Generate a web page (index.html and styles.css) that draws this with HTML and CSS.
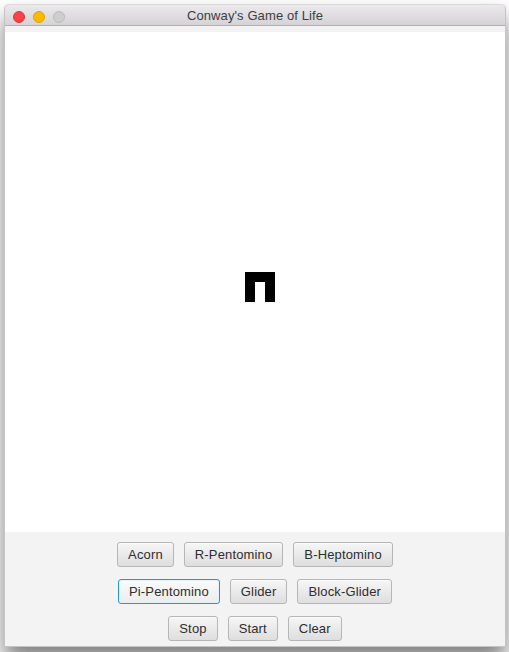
FILE: index.html
```html
<!DOCTYPE html>
<html>
<head>
<meta charset="utf-8">
<link rel="stylesheet" href="styles.css">
</head>
<body>
<div class="window">
  <div class="titlebar">
    <div class="lights">
      <span class="light red"></span>
      <span class="light yellow"></span>
      <span class="light grey"></span>
    </div>
    <div class="title">Conway's Game of Life</div>
  </div>
  <div class="strip"></div>
  <div class="canvas">
    <div class="pattern">
      <span class="cell on"></span><span class="cell on"></span><span class="cell on"></span>
      <span class="cell on"></span><span class="cell"></span><span class="cell on"></span>
      <span class="cell on"></span><span class="cell"></span><span class="cell on"></span>
    </div>
  </div>
  <div class="controls">
    <div class="row">
      <button class="btn">Acorn</button>
      <button class="btn">R-Pentomino</button>
      <button class="btn">B-Heptomino</button>
    </div>
    <div class="row">
      <button class="btn focused">Pi-Pentomino</button>
      <button class="btn">Glider</button>
      <button class="btn">Block-Glider</button>
    </div>
    <div class="row">
      <button class="btn">Stop</button>
      <button class="btn">Start</button>
      <button class="btn">Clear</button>
    </div>
  </div>
</div>
</body>
</html>
```

FILE: styles.css
```css
html, body {
  margin: 0;
  padding: 0;
  background: #ffffff;
  overflow: hidden;
  height: 652px;
}
body {
  font-family: "Liberation Sans", Arial, sans-serif;
}
.window {
  margin: 4px 0 0 4px;
  width: 500px;
  height: 642px;
  border: 1px solid #c4c4c4;
  border-top: none;
  border-radius: 5px 5px 0 0;
  background: #f3f3f3;
  box-shadow: 0 14px 22px rgba(0, 0, 0, 0.5);
  overflow: hidden;
}
.titlebar {
  position: relative;
  height: 22px;
  background: linear-gradient(#ebe9eb, #d5d3d5);
  border-top: 1px solid #dadada;
  border-bottom: 1px solid #b1b1b1;
  border-radius: 5px 5px 0 0;
  display: flex;
  align-items: center;
  justify-content: center;
  box-sizing: border-box;
}
.lights {
  position: absolute;
  left: 8px;
  top: 6px;
  display: flex;
  gap: 8px;
}
.light {
  width: 12px;
  height: 12px;
  border-radius: 50%;
  box-sizing: border-box;
}
.red { background: #fd3f47; border: 1px solid #e0333a; }
.yellow { background: #fdb900; border: 1px solid #e0a300; }
.grey { background: #cfcecf; border: 1px solid #bcbbbc; }
.title {
  font-size: 13px;
  color: #3d3d3d;
  line-height: 22px;
  margin-top: 1px;
  letter-spacing: 0.1px;
}
.strip {
  height: 6px;
  background: #f3f3f3;
}
.canvas {
  position: relative;
  height: 500px;
  background: #ffffff;
}
.pattern {
  position: absolute;
  left: 240px;
  top: 240px;
  display: grid;
  grid-template-columns: repeat(3, 10px);
  grid-template-rows: repeat(3, 10px);
}
.cell.on { background: #000; }
.controls {
  padding-top: 10px;
  display: flex;
  flex-direction: column;
  gap: 12px;
}
.row {
  display: flex;
  justify-content: center;
  gap: 10px;
}
.btn {
  height: 25px;
  padding: 0 10px;
  font-family: "Liberation Sans", Arial, sans-serif;
  font-size: 13px;
  letter-spacing: 0.15px;
  color: #2e2e2e;
  background: linear-gradient(#f6f6f6, #dedede);
  border: 1px solid #b6b6b6;
  border-radius: 3px;
  box-shadow: inset 0 1px 0 #fbfbfb;
  margin: 0;
}
.btn.focused {
  border: 1px solid #1d9ad6;
  box-shadow: inset 0 0 0 1px #e3f1f8;
  background: linear-gradient(#fbfbfb, #ececec);
}
```
